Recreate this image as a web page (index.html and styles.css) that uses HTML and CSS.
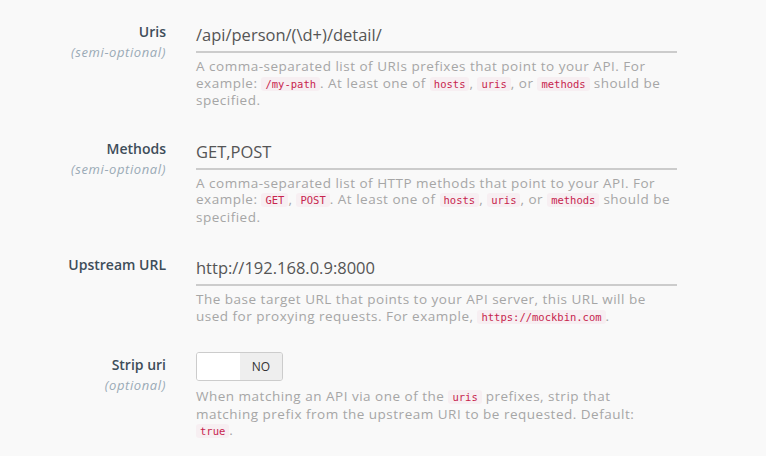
FILE: index.html
```html
<!DOCTYPE html>
<html>
<head>
<meta charset="utf-8">
<link rel="stylesheet" href="styles.css">
</head>
<body>
<form class="form">
  <div class="row">
    <div class="label-col">
      <div class="label">Uris</div>
      <div class="sub">(semi-optional)</div>
    </div>
    <div class="field">
      <div class="input">/api/person/(\d+)/detail/</div>
      <p class="help">A comma-separated list of URIs prefixes that point to your API. For example: <code>/my-path</code>. At least one of <code>hosts</code>, <code>uris</code>, or <code>methods</code> should be specified.</p>
    </div>
  </div>
  <div class="row">
    <div class="label-col">
      <div class="label">Methods</div>
      <div class="sub">(semi-optional)</div>
    </div>
    <div class="field">
      <div class="input">GET,POST</div>
      <p class="help">A comma-separated list of HTTP methods that point to your API. For example: <code>GET</code>, <code>POST</code>. At least one of <code>hosts</code>, <code>uris</code>, or <code>methods</code> should be specified.</p>
    </div>
  </div>
  <div class="row">
    <div class="label-col">
      <div class="label">Upstream URL</div>
    </div>
    <div class="field">
      <div class="input">http://192.168.0.9:8000</div>
      <p class="help">The base target URL that points to your API server, this URL will be used for proxying requests. For example, <code>https://mockbin.com</code>.</p>
    </div>
  </div>
  <div class="row row-toggle">
    <div class="label-col">
      <div class="label">Strip uri</div>
      <div class="sub">(optional)</div>
    </div>
    <div class="field">
      <div class="toggle"><span class="knob"></span><span class="state">NO</span></div>
      <p class="help">When matching an API via one of the <code>uris</code> prefixes, strip that matching prefix from the upstream URI to be requested. Default: <code>true</code>.</p>
    </div>
  </div>
</form>
</body>
</html>
```
FILE: styles.css
```css
html, body {
  margin: 0;
  padding: 0;
  background: #f9f9f9;
}
body {
  font-family: "Open Sans", "DejaVu Sans", sans-serif;
  color: #555;
}
.form {
  padding-top: 19px;
}
.row {
  display: grid;
  grid-template-columns: 166px 481px;
  column-gap: 30px;
  margin-bottom: 27px;
}
.label-col {
  text-align: right;
  padding-top: 4px;
}
.label {
  font-size: 14px;
  font-weight: 600;
  color: #3e4d59;
  line-height: 18px;
}
.sub {
  font-size: 13px;
  font-style: italic;
  letter-spacing: 0.6px;
  color: #9aaab6;
  line-height: 18px;
  margin-top: 2px;
}
.input {
  font-size: 16.5px;
  color: #555;
  height: 32px;
  line-height: 32px;
  border-bottom: 2px solid #cccccc;
}
.help {
  margin: 5px 0 0;
  width: 478px;
  font-size: 13.5px;
  letter-spacing: 0.5px;
  line-height: 16.5px;
  color: #a6a6a6;
}
code {
  font-family: "DejaVu Sans Mono", "Liberation Mono", monospace;
  font-size: 10.5px;
  letter-spacing: 0;
  color: #c7254e;
  background: #f7eff2;
  padding: 1px 4px;
  border-radius: 3px;
}
.toggle {
  display: flex;
  width: 87px;
  height: 29px;
  box-sizing: border-box;
  border: 1px solid #cccccc;
  border-radius: 3px;
  overflow: hidden;
}
.knob {
  width: 43px;
  background: #ffffff;
}
.state {
  flex: 1;
  background: #eeeeee;
  font-size: 12px;
  color: #333;
  display: flex;
  align-items: center;
  justify-content: center;
}
.row-toggle .help {
  margin-top: 7px;
}
```
